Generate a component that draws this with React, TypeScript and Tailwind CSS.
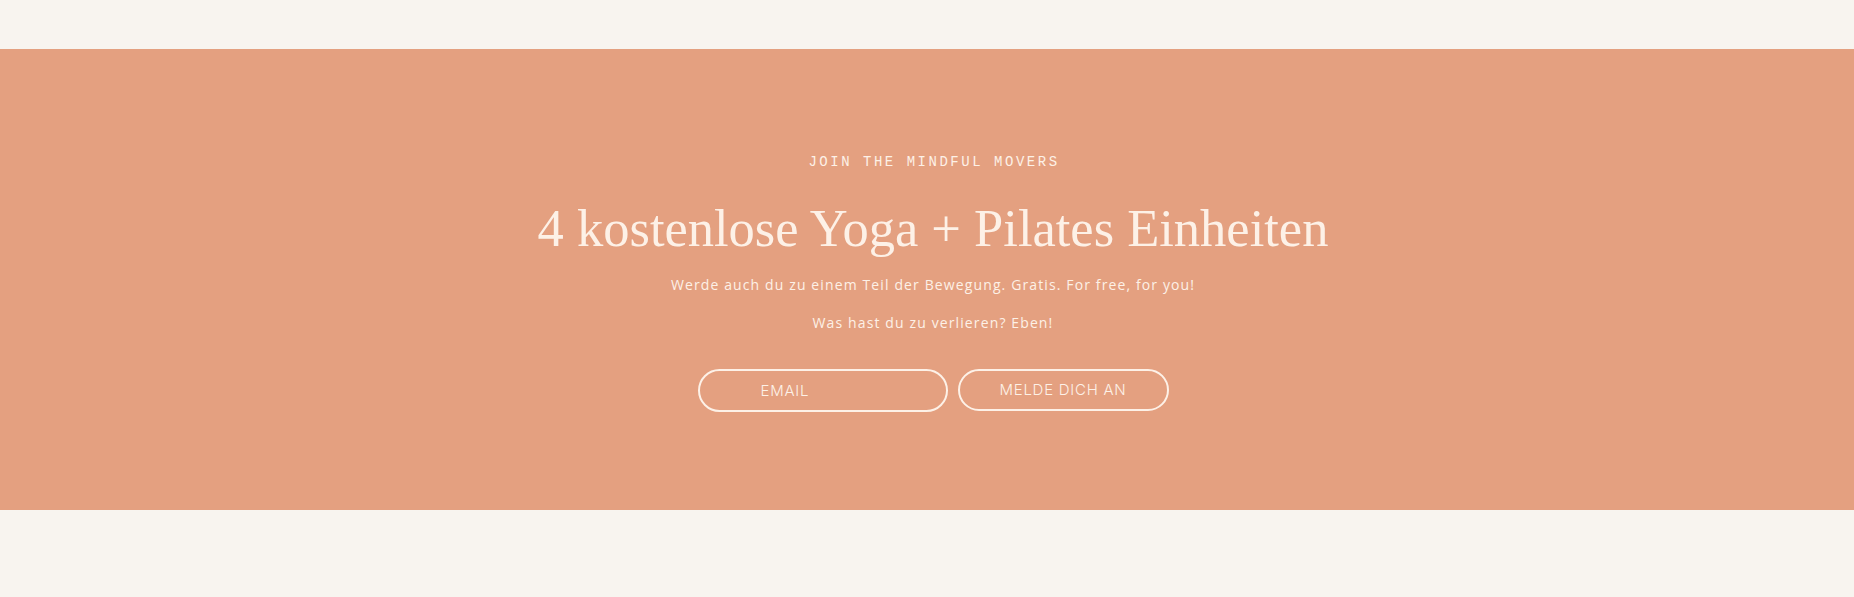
import React from 'react';

const App: React.FC = () => {
  return (
    <div className="min-h-[597px] w-full bg-[#f8f4ef] pt-[49px]">
      <section className="flex h-[461px] flex-col items-center bg-[#e4a080] pl-[12px] text-[#fdf1e7]">
        <p
          className="mt-[105px] pl-[2px] text-[14px] leading-[16px] tracking-[0.18em]"
          style={{ fontFamily: '"Liberation Mono", monospace' }}
        >
          JOIN THE MINDFUL MOVERS
        </p>
        <h2
          className="mt-[30px] text-[52.5px] leading-[56px]"
          style={{ fontFamily: '"Liberation Serif", serif' }}
        >
          4 kostenlose Yoga + Pilates Einheiten
        </h2>
        <div
          className="mt-[20px] flex flex-col items-center gap-[20px] text-[14px] leading-[18px] tracking-[0.08em]"
          style={{ fontFamily: '"Open Sans", sans-serif' }}
        >
          <p>Werde auch du zu einem Teil der Bewegung. Gratis. For free, for you!</p>
          <p>Was hast du zu verlieren? Eben!</p>
        </div>
        <form
          className="mt-[37px] flex items-start gap-[10px]"
          style={{ fontFamily: 'Inter, sans-serif' }}
          onSubmit={(e) => e.preventDefault()}
        >
          <input
            type="email"
            placeholder="EMAIL"
            className="h-[43px] w-[250px] rounded-full border-2 border-[#fdf1e7] bg-transparent pl-[61px] text-[15px] font-light tracking-[0.05em] text-[#fdf1e7] outline-none placeholder:text-[#fdf1e7]"
          />
          <button
            type="submit"
            className="h-[42px] w-[211px] rounded-full border-2 border-[#fdf1e7] text-[15px] font-light tracking-[0.05em]"
          >
            MELDE DICH AN
          </button>
        </form>
      </section>
    </div>
  );
};

export default App;
